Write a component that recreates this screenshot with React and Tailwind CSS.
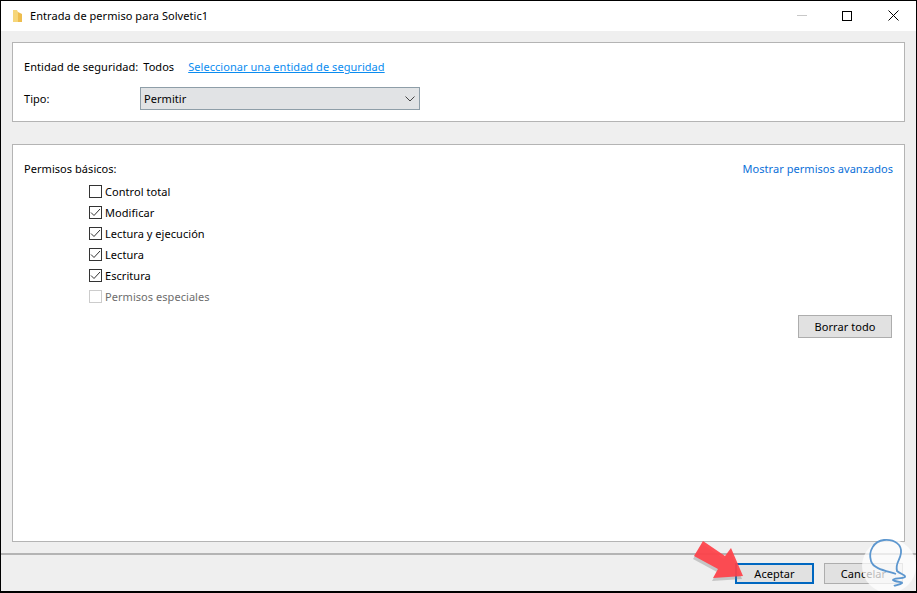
import React from 'react';

const permisos = [
  { label: 'Control total', checked: false },
  { label: 'Modificar', checked: true },
  { label: 'Lectura y ejecución', checked: true },
  { label: 'Lectura', checked: true },
  { label: 'Escritura', checked: true },
];

function Check({ checked, disabled }) {
  return (
    <span className={`w-[13px] h-[13px] border flex items-center justify-center bg-white ${disabled ? 'border-[#cccccc]' : 'border-[#333333]'}`}>
      {checked && (
        <svg width="11" height="11" viewBox="0 0 11 11" fill="none" stroke="#333333" strokeWidth="1">
          <path d="M1 5.5 L4 8.5 L10 2" />
        </svg>
      )}
    </span>
  );
}

function Row({ label, checked, disabled }) {
  return (
    <div className="h-[21px] flex items-center gap-[3px]">
      <Check checked={checked} disabled={disabled} />
      <span className={disabled ? 'text-[#6d6d6d]' : ''}>{label}</span>
    </div>
  );
}

export default function App() {
  return (
    <div className="w-[917px] h-[593px] relative overflow-hidden flex flex-col bg-[#efefef] border-t border-l border-r border-b-2 border-black text-[11px] tracking-[0.05px] text-black font-['Noto_Sans','Open_Sans',sans-serif] leading-none">
      {/* Title bar */}
      <div className="h-[30px] shrink-0 bg-white flex items-center pl-[11px] pb-[1px]">
        <svg width="11" height="14" viewBox="0 0 11 14" className="mr-[7px]">
          <path d="M1 1 H5 L6 3 V13 H1 Z" fill="#f6d67a" />
          <path d="M6 3 L10 5 V13 L6 13 Z" fill="#eebd4e" />
        </svg>
        <span>Entrada de permiso para Solvetic1</span>
        <div className="ml-auto flex items-center pr-px">
          <div className="w-[44px] flex justify-center"><div className="w-[10px] h-px bg-[#c8c8c8]" /></div>
          <div className="w-[46px] mr-px flex justify-center"><div className="w-[10px] h-[10px] border border-black" /></div>
          <div className="w-[44px] flex justify-center">
            <svg width="11" height="11" viewBox="0 0 11 11" stroke="#000000" strokeWidth="1"><path d="M0.5 0.5 L10.5 10.5 M10.5 0.5 L0.5 10.5" /></svg>
          </div>
        </div>
      </div>

      <div className="flex-1 flex flex-col px-[11px] pt-[11px]">
        {/* Entidad panel */}
        <div className="h-[80px] shrink-0 bg-white border border-[#b4b4b4] px-[11px] pt-[17px]">
          <div className="flex items-center h-[13px]">
            <span>Entidad de seguridad:</span>
            <span className="ml-[5px]">Todos</span>
            <span className="ml-[14px] text-[#0a8cf0] underline">Seleccionar una entidad de seguridad</span>
          </div>
          <div className="flex items-center mt-[14px]">
            <span className="w-[116px]">Tipo:</span>
            <div className="w-[280px] h-[23px] bg-[#e1e3e5] border border-[#8e9ea8] flex items-center pl-[3px] pr-[4px]">
              <span>Permitir</span>
              <svg className="ml-auto" width="10" height="6" viewBox="0 0 10 6" fill="none" stroke="#444444" strokeWidth="1"><path d="M0.5 0.5 L5 5 L9.5 0.5" /></svg>
            </div>
          </div>
        </div>

        {/* Permisos panel */}
        <div className="mt-[22px] h-[398px] shrink-0 bg-white border border-[#b4b4b4] pl-[11px] pr-[11px] pt-[17px] flex flex-col">
          <div className="flex items-center h-[13px] justify-between">
            <span>Permisos básicos:</span>
            <span className="text-[#0a6fd8]">Mostrar permisos avanzados</span>
          </div>
          <div className="ml-[65px] mt-[6px]">
            {permisos.map((p) => (
              <Row key={p.label} label={p.label} checked={p.checked} />
            ))}
            <Row label="Permisos especiales" disabled />
          </div>
          <div className="flex justify-end mt-[8px] pr-px">
            <button className="w-[94px] h-[23px] bg-[#e1e1e1] border border-[#adadad]">Borrar todo</button>
          </div>
        </div>

        {/* Footer */}
        <div className="mt-[11px] -mx-[11px] h-[2px] bg-[#b4b4b4] shrink-0" />
        <div className="flex justify-end gap-[10px] mt-[8px] -mr-[9px] pr-[11px]">
          <button className="w-[79px] h-[21px] bg-[#e1e1e1] border-2 border-[#0067c0]">Aceptar</button>
          <button className="w-[79px] h-[21px] bg-[#e1e1e1] border border-[#adadad]">Cancelar</button>
        </div>
      </div>

      {/* Arrow over the footer */}
      <svg className="absolute left-[690px] top-[535px]" width="60" height="50" viewBox="0 0 60 50">
        <path d="M12 5 L3 20 L27 33 L22 42 L52 40 L40 12 L34 20 Z" fill="#777777" opacity="0.35" transform="translate(-1 3)" />
        <path d="M12 5 L3 20 L27 33 L22 42 L52 40 L40 12 L34 20 Z" fill="#ff4048" opacity="0.92" />
      </svg>

      {/* Watermark logo */}
      <svg className="absolute left-[856px] top-[532px]" width="60" height="60" viewBox="0 0 60 60" fill="none">
        <circle cx="32" cy="33" r="27" fill="#ffffff" opacity="0.72" />
        <path d="M39 41 C30 38 16 36 14 28 C11 18 17 8 27 7 C38 6 45 12 44 20 C43 28 38 30 40 38 C43 41 49 42 48 44 C45 46 36 45 36 47 C38 49 46 49 45 50 C43 52 38 52 37 53" stroke="#5d97cf" strokeWidth="1.8" />
      </svg>
    </div>
  );
}
